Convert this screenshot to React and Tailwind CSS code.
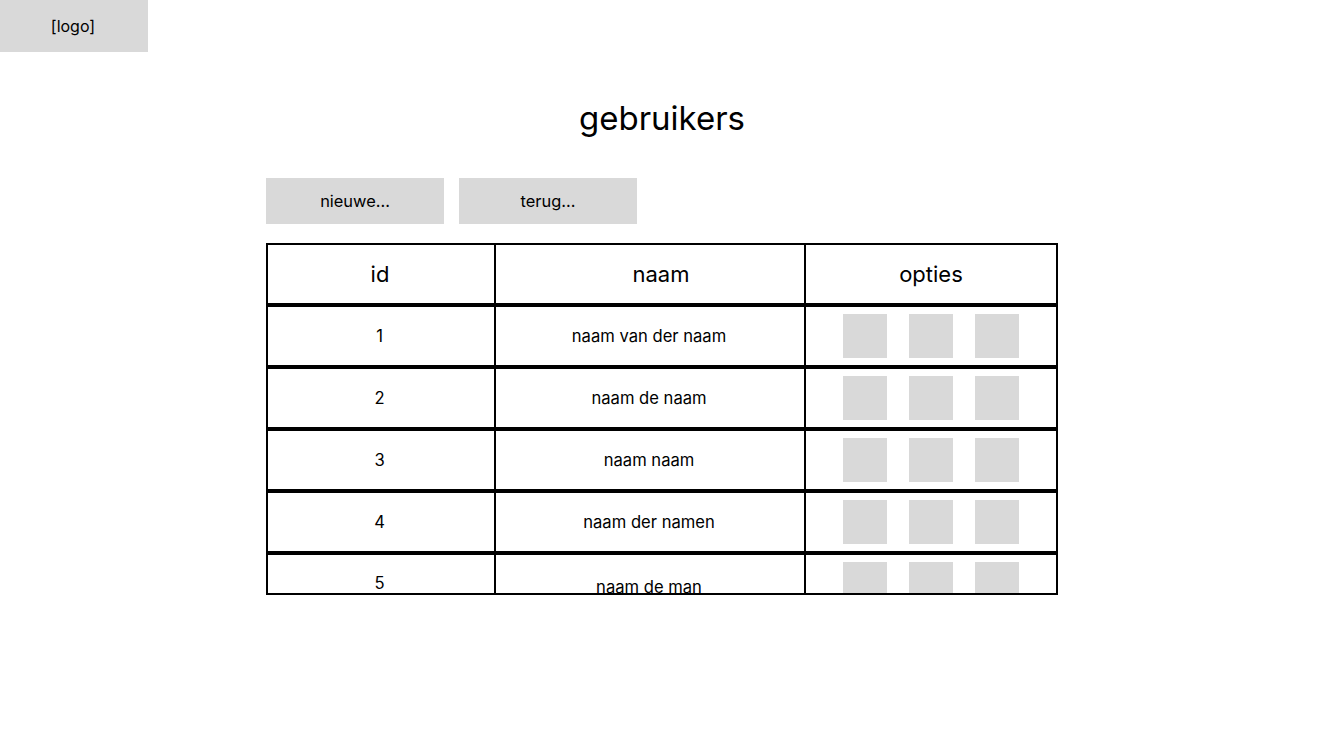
import React from "react";

const users = [
  { id: 1, naam: "naam van der naam" },
  { id: 2, naam: "naam de naam" },
  { id: 3, naam: "naam naam" },
  { id: 4, naam: "naam der namen" },
  { id: 5, naam: "naam de man", last: true },
];

const OptionBoxes = () => (
  <div className="flex gap-[22px]">
    <div className="w-[44px] h-[44px] bg-[#d9d9d9]" />
    <div className="w-[44px] h-[44px] bg-[#d9d9d9]" />
    <div className="w-[44px] h-[44px] bg-[#d9d9d9]" />
  </div>
);

const Row = ({ user }) => (
  <div className="flex h-[62px] border-2 border-black text-[16.6px]">
    <div
      className={
        user.last
          ? "w-[228px] border-r-2 border-black flex items-center justify-center pr-[3px] pb-[2px]"
          : "w-[228px] border-r-2 border-black flex items-center justify-center pr-[3px]"
      }
    >
      {user.id}
    </div>
    <div
      className={
        user.last
          ? "w-[310px] border-r-2 border-black flex items-center justify-center pr-[2px] pt-[6px]"
          : "w-[310px] border-r-2 border-black flex items-center justify-center pr-[2px]"
      }
    >
      {user.naam}
    </div>
    <div className="flex-1 flex items-center justify-center">
      <OptionBoxes />
    </div>
  </div>
);

export default function App() {
  return (
    <div
      className="min-h-[746px] bg-white text-black"
      style={{ fontFamily: "Inter, 'Noto Sans', sans-serif" }}
    >
      <div className="w-[148px] h-[52px] bg-[#d9d9d9] flex items-center justify-center text-[16px] pr-[2px]">
        [logo]
      </div>

      <div className="ml-[266px] w-[792px]">
        <h1 className="text-[33px] leading-[44px] text-center mt-[44px]">gebruikers</h1>

        <div className="flex gap-[15px] mt-[38px]">
          <button className="w-[178px] h-[46px] bg-[#d9d9d9] text-[16.4px]">nieuwe...</button>
          <button className="w-[178px] h-[46px] bg-[#d9d9d9] text-[16.4px]">terug...</button>
        </div>

        <div className="mt-[19px] h-[352px] overflow-hidden border-b-2 border-black">
          <div className="flex h-[62px] border-2 border-black text-[22px]">
            <div className="w-[228px] border-r-2 border-black flex items-center justify-center pr-[2px]">
              id
            </div>
            <div className="w-[310px] border-r-2 border-black flex items-center justify-center pl-[22px]">
              naam
            </div>
            <div className="flex-1 flex items-center justify-center">opties</div>
          </div>
          {users.map((u) => (
            <Row key={u.id} user={u} />
          ))}
        </div>
      </div>
    </div>
  );
}
